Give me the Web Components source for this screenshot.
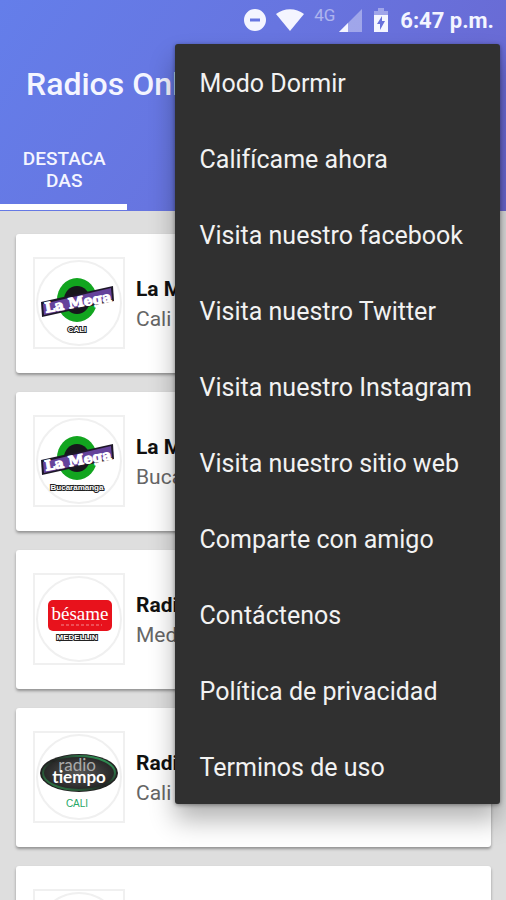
<!DOCTYPE html>
<html lang="es">
<head>
<meta charset="utf-8">
<meta name="viewport" content="width=device-width, initial-scale=1">
<title>Radios Online</title>
<style>
  body {
    margin: 0;
    font-family: Roboto, "Liberation Sans", sans-serif;
    background: #dedede;
  }
</style>
</head>
<body>
<radio-app></radio-app>

<template id="logo-mega">
  <svg>
    <ellipse cx="44" cy="43" rx="20" ry="22" fill="#12a51f"/>
    <ellipse cx="44" cy="43" rx="13" ry="14" fill="#17171c"/>
    <path d="M8 45 L80 29 L81 44 L9 60 Z" fill="#1d1728"/>
    <path d="M10 47 L78 31 L79 42 L11 58 Z" fill="#65429b"/>
    <text x="45" y="50" transform="rotate(-10 45 45)" text-anchor="middle" font-family="DejaVu Serif, serif" font-weight="700" font-size="14" fill="#fff" stroke="#fff" stroke-width="1">La Mega</text>
  </svg>
</template>

<template id="logo-besame">
  <svg>
    <rect x="15" y="27" width="64" height="31" rx="5" fill="#e8121c"/>
    <text x="47" y="47" text-anchor="middle" font-family="Liberation Serif, serif" font-size="19" fill="#fff">bésame</text>
    <path d="M28 52 H69" stroke="#f28a8e" stroke-width="1" stroke-dasharray="3 2"/>
  </svg>
</template>

<template id="logo-tiempo">
  <svg>
    <defs>
      <linearGradient id="rim" x1="0" y1="1" x2="1" y2="0">
        <stop offset="0" stop-color="#2f8a4c"/>
        <stop offset="0.5" stop-color="#222"/>
        <stop offset="1" stop-color="#35b464"/>
      </linearGradient>
      <radialGradient id="disc">
        <stop offset="0" stop-color="#555"/>
        <stop offset="1" stop-color="#262626"/>
      </radialGradient>
    </defs>
    <ellipse cx="46" cy="42" rx="39" ry="19" fill="#222"/>
    <ellipse cx="46" cy="42" rx="36" ry="17" fill="url(#disc)" stroke="url(#rim)" stroke-width="2"/>
    <text x="44" y="40" text-anchor="middle" font-family="Lato, sans-serif" font-size="17" fill="#aaa">radio</text>
    <text x="46" y="52" text-anchor="middle" font-family="Lato, sans-serif" font-weight="700" font-size="17" fill="#fff">tiempo</text>
  </svg>
</template>

<script>
class StatusBar extends HTMLElement {
    constructor() {
        super();
        this.attachShadow({ mode: "open" });
        this.shadowRoot.innerHTML = `
        <style>
        :host {
          display: flex;
          align-items: center;
          justify-content: flex-end;
          gap: 10px;
          height: 40px;
          padding-right: 12px;
          color: #f4f5ff;
        }

        svg {
          display: block;
          fill: #f4f5ff;
        }

        .mobile {
          display: flex;
          gap: 4px;
        }

        .network {
          font-size: 17px;
          line-height: 14px;
          font-weight: 400;
          opacity: 0.5;
        }

        time {
          font-size: 22px;
          font-weight: 700;
        }
        </style>
        <svg width="22" height="24" viewBox="0 0 22 24"><path fill-rule="evenodd" d="M11 1a11 11 0 1 0 0 22a11 11 0 0 0 0-22ZM6 10.500h10v3H6Z"/></svg>
        <svg width="28" height="24" viewBox="0 0 28 24"><path d="M14 23 L0 6 C8 -0.500 20 -0.500 28 6 Z"/></svg>
        <div class="mobile">
          <span class="network">4G</span>
          <svg width="23" height="24" viewBox="0 0 23 24"><path d="M23 1V24H0Z" opacity="0.4"/><path d="M9 15V24H0Z"/></svg>
        </div>
        <svg width="18" height="24" viewBox="0 0 18 24"><path d="M2 7V3H6V0H12V3H16V7Z" opacity="0.4"/><path fill-rule="evenodd" d="M2 7H16V24H2ZM10 8L5 16H8V22L13 13H10Z"/></svg>
        <time>6:47 p.m.</time>
        `;
    }
}

customElements.define("status-bar", StatusBar);

class AppHeader extends HTMLElement {
    constructor() {
        super();
        this.attachShadow({ mode: "open" });
        this.shadowRoot.innerHTML = `
        <style>
        :host {
          display: block;
          padding-bottom: 1px;
          background: linear-gradient(125deg, #647eea, #6775e0 45%, #6a66cf);
          color: #f4f5ff;
        }

        h1 {
          margin: 0;
          padding: 0 26px;
          font-size: 32px;
          line-height: 88px;
          font-weight: 500;
          white-space: nowrap;
        }

        .tabs {
          display: grid;
          grid-template-columns: repeat(4, 1fr);
        }

        button {
          height: 82px;
          padding: 20px 18px 12px 20px;
          border: 0;
          border-bottom: 6px solid #fff;
          background: none;
          color: inherit;
          font: 500 19px/22px Roboto, "Liberation Sans", sans-serif;
          text-align: center;
          overflow-wrap: anywhere;
        }
        </style>
        <status-bar></status-bar>
        <h1><slot></slot></h1>
        <div class="tabs" role="tablist">
          <button role="tab" aria-selected="true">DESTACADAS</button>
        </div>
        `;
    }
}

customElements.define("app-header", AppHeader);

class StationLogo extends HTMLElement {
    connectedCallback() {
        this.attachShadow({ mode: "open" });
        this.shadowRoot.innerHTML = `
        <style>
        :host {
          display: block;
          flex: none;
        }

        .frame {
          display: block;
          width: 92px;
          height: 92px;
        }

        .caption {
          font: 700 8px "Liberation Sans", sans-serif;
          text-anchor: middle;
          fill: #fff;
          stroke: #222;
          stroke-width: 2px;
          paint-order: stroke;
        }

        .caption.tiempo {
          font: 400 10px "Liberation Sans", sans-serif;
          fill: #26a866;
          stroke: none;
        }
        </style>
        <svg class="frame" viewBox="0 0 92 92">
          <rect x="1" y="1" width="90" height="90" fill="#fff" stroke="#f0f0f0" stroke-width="2"/>
          <circle cx="46" cy="46" r="42" fill="#fff" stroke="#f0f0f0" stroke-width="2"/>
        </svg>
        `;

        const kind = this.getAttribute("kind");
        if (!kind) return;
        const frame = this.shadowRoot.querySelector(".frame");
        frame.appendChild(document.getElementById("logo-" + kind).content.cloneNode(true));

        const caption = document.createElementNS("http://www.w3.org/2000/svg", "text");
        caption.setAttribute("class", "caption " + kind);
        caption.setAttribute("x", "44");
        caption.setAttribute("y", { mega: 75, besame: 67, tiempo: 76 }[kind]);
        caption.textContent = this.getAttribute("caption");
        frame.appendChild(caption);
    }
}

customElements.define("station-logo", StationLogo);

class StationCard extends HTMLElement {
    constructor() {
        super();
        this.attachShadow({ mode: "open" });
        this.shadowRoot.innerHTML = `
        <style>
        :host {
          display: flex;
          align-items: center;
          gap: 11px;
          padding: 23px 17px 24px;
          border-radius: 3px;
          background: #fff;
          box-shadow: 0 2px 3px rgba(0, 0, 0, 0.35);
        }

        .info {
          padding-top: 1px;
          line-height: 30px;
          font-size: 21px;
          color: #666;
          white-space: nowrap;
        }

        .name {
          font-weight: 700;
          color: #111;
        }
        </style>
        <slot name="logo"></slot>
        <div class="info">
          <div class="name"><slot name="name"></slot></div>
          <div><slot></slot></div>
        </div>
        `;
    }
}

customElements.define("station-card", StationCard);

class OverflowMenu extends HTMLElement {
    constructor() {
        super();
        this.attachShadow({ mode: "open" });
        this.shadowRoot.innerHTML = `
        <style>
        :host {
          position: absolute;
          top: 44px;
          right: 6px;
          display: flex;
          flex-direction: column;
          border-radius: 3px;
          background: #303030;
          box-shadow: 0 16px 26px rgba(0, 0, 0, 0.3), 0 1px 4px rgba(0, 0, 0, 0.4);
        }
        </style>
        <slot></slot>
        `;
    }

    connectedCallback() {
        this.setAttribute("role", "menu");
    }
}

customElements.define("overflow-menu", OverflowMenu);

class MenuOption extends HTMLElement {
    constructor() {
        super();
        this.attachShadow({ mode: "open" });
        this.shadowRoot.innerHTML = `
        <style>
        :host {
          display: block;
        }

        button {
          display: block;
          width: 100%;
          height: 76px;
          padding: 2px 28px 0 25px;
          border: 0;
          background: none;
          color: #f2f2f2;
          font: 400 25px Roboto, "Liberation Sans", sans-serif;
          text-align: left;
          white-space: nowrap;
        }
        </style>
        <button role="menuitem"><slot></slot></button>
        `;
    }
}

customElements.define("menu-option", MenuOption);

class RadioApp extends HTMLElement {
    constructor() {
        super();
        this.attachShadow({ mode: "open" });
        this.shadowRoot.innerHTML = `
        <style>
        :host {
          position: relative;
          display: flex;
          flex-direction: column;
          height: 100vh;
          overflow: hidden;
        }

        app-header {
          flex: none;
        }

        main {
          flex: 1;
          display: flex;
          flex-direction: column;
          gap: 19px;
          min-height: 0;
          padding: 23px 15px 23px 16px;
          overflow-y: auto;
          scrollbar-width: none;
        }

        station-card {
          flex: none;
        }
        </style>
        <app-header>Radios Online</app-header>
        <main>
          <station-card>
            <station-logo slot="logo" kind="mega" caption="CALI"></station-logo>
            <span slot="name">La Mega</span>Cali
          </station-card>
          <station-card>
            <station-logo slot="logo" kind="mega" caption="Bucaramanga"></station-logo>
            <span slot="name">La Mega</span>Bucaramanga
          </station-card>
          <station-card>
            <station-logo slot="logo" kind="besame" caption="MEDELLIN"></station-logo>
            <span slot="name">Radio Bésame</span>Medellín
          </station-card>
          <station-card>
            <station-logo slot="logo" kind="tiempo" caption="CALI"></station-logo>
            <span slot="name">Radio Tiempo</span>Cali
          </station-card>
          <station-card>
            <station-logo slot="logo"></station-logo>
          </station-card>
        </main>
        <overflow-menu>
          <menu-option>Modo Dormir</menu-option>
          <menu-option>Califícame ahora</menu-option>
          <menu-option>Visita nuestro facebook</menu-option>
          <menu-option>Visita nuestro Twitter</menu-option>
          <menu-option>Visita nuestro Instagram</menu-option>
          <menu-option>Visita nuestro sitio web</menu-option>
          <menu-option>Comparte con amigo</menu-option>
          <menu-option>Contáctenos</menu-option>
          <menu-option>Política de privacidad</menu-option>
          <menu-option>Terminos de uso</menu-option>
        </overflow-menu>
        `;
    }
}

customElements.define("radio-app", RadioApp);
</script>
</body>
</html>
